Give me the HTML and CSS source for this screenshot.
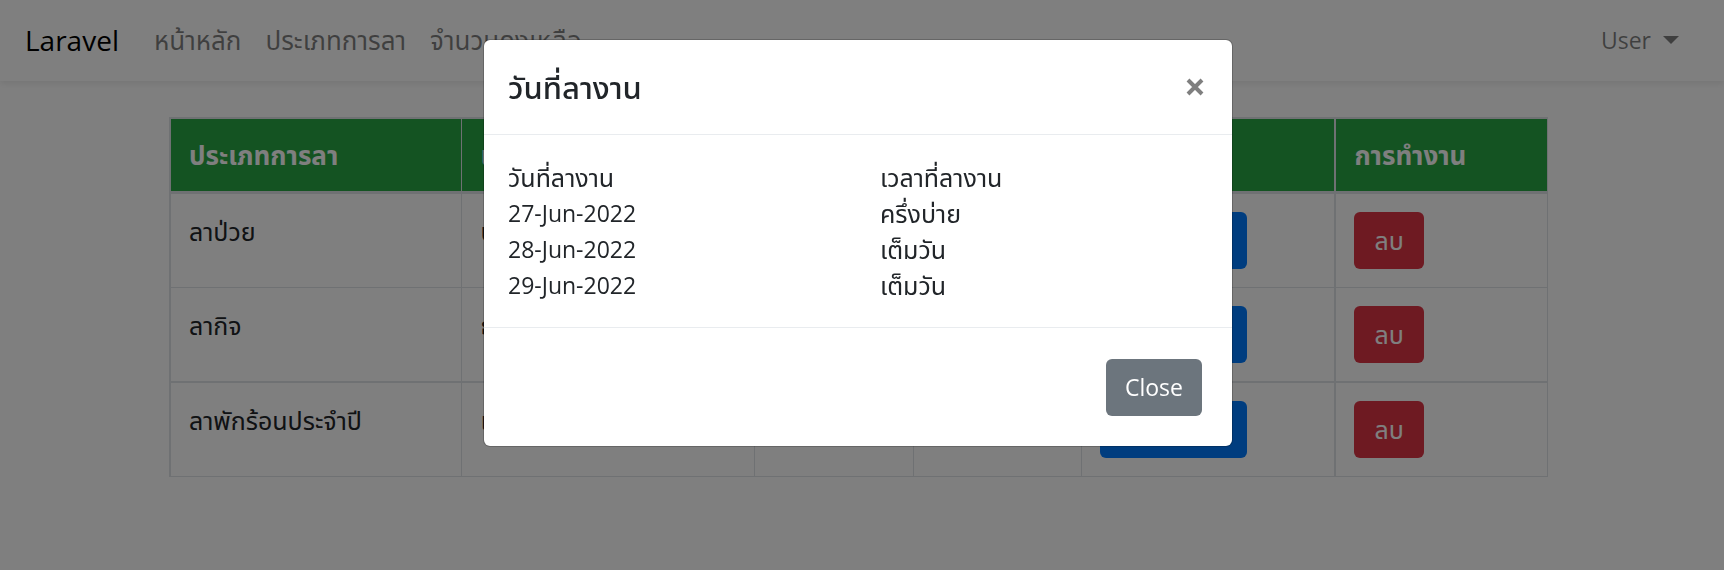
FILE: index.html
```
<!DOCTYPE html>
<html lang="th">
<head>
<meta charset="utf-8">
<meta name="viewport" content="width=device-width, initial-scale=1">
<title>Laravel</title>
<link rel="stylesheet" href="styles.css">
</head>
<body>
<nav class="navbar">
  <a class="brand" href="#">Laravel</a>
  <ul class="nav-links">
    <li><a href="#">หน้าหลัก</a></li>
    <li><a href="#">ประเภทการลา</a></li>
    <li><a href="#">จำนวนคงเหลือ</a></li>
  </ul>
  <button class="user-menu" type="button">User <span class="caret"></span></button>
</nav>
<main class="container">
  <table class="leave-table">
    <colgroup>
      <col class="col-type"><col class="col-reason"><col class="col-start"><col class="col-end"><col class="col-dates"><col class="col-action">
    </colgroup>
    <thead>
      <tr><th>ประเภทการลา</th><th>เหตุผล</th><th></th><th></th><th></th><th>การทำงาน</th></tr>
    </thead>
    <tbody>
      <tr><td>ลาป่วย</td><td>ปวดหัว</td><td></td><td></td><td><button class="btn btn-primary" type="button">วันที่ลางาน</button></td><td><button class="btn btn-danger" type="button">ลบ</button></td></tr>
      <tr><td>ลากิจ</td><td>ธุระ</td><td></td><td></td><td><button class="btn btn-primary" type="button">วันที่ลางาน</button></td><td><button class="btn btn-danger" type="button">ลบ</button></td></tr>
      <tr><td>ลาพักร้อนประจำปี</td><td>เที่ยว</td><td></td><td></td><td><button class="btn btn-primary" type="button">วันที่ลางาน</button></td><td><button class="btn btn-danger" type="button">ลบ</button></td></tr>
    </tbody>
  </table>
</main>
<div class="backdrop">
  <section class="modal" role="dialog" aria-modal="true" aria-labelledby="modal-title">
    <header class="modal-header">
      <h5 class="modal-title" id="modal-title">วันที่ลางาน</h5>
      <button class="close" type="button" aria-label="Close">
        <svg viewBox="0 0 18 18" width="18" height="18" aria-hidden="true"><path d="M2 2 16 16M16 2 2 16"/></svg>
      </button>
    </header>
    <div class="modal-body">
      <div class="thai">วันที่ลางาน</div><div class="thai">เวลาที่ลางาน</div>
      <div>27-Jun-2022</div><div class="thai">ครึ่งบ่าย</div>
      <div>28-Jun-2022</div><div class="thai">เต็มวัน</div>
      <div>29-Jun-2022</div><div class="thai">เต็มวัน</div>
    </div>
    <footer class="modal-footer">
      <button class="btn btn-secondary" type="button">Close</button>
    </footer>
  </section>
</div>
</body>
</html>
```
FILE: styles.css
```
* { box-sizing: border-box; }
body {
  margin: 0;
  font-family: "Open Sans", "Noto Sans Thai", "Noto Sans", sans-serif;
  font-size: 23px;
  line-height: 36px;
  color: #212529;
  background: #fff;
}
button { font: inherit; }
.navbar {
  display: flex;
  align-items: center;
  padding: 11px 39px 13px 25px;
  min-height: 81px;
  box-shadow: 0 3px 6px rgba(0, 0, 0, .075);
}
.brand {
  margin-right: 23px;
  font-size: 28px;
  color: #000;
  text-decoration: none;
}
.nav-links {
  display: flex;
  margin: 0;
  padding: 0;
  list-style: none;
  font-size: 26px;
}
.nav-links a {
  padding: 12px;
  color: rgba(0, 0, 0, .5);
  text-decoration: none;
}
.user-menu {
  display: flex;
  align-items: center;
  gap: 12px;
  margin-left: auto;
  padding: 6px;
  border: 0;
  background: none;
  color: rgba(0, 0, 0, .5);
}
.caret {
  border: 8px solid transparent;
  border-top-color: currentColor;
  border-bottom: 0;
}
.container {
  width: calc(80% + 7px);
  margin: 36px auto 0;
  padding-right: 7px;
}
.thai, .leave-table { font-size: 25px; }
.leave-table {
  width: 100%;
  table-layout: fixed;
  border-collapse: collapse;
}
.leave-table th, .leave-table td {
  padding: 18px;
  border: 1px solid #dee2e6;
  text-align: left;
  vertical-align: top;
}
.leave-table th {
  border-top-width: 2px;
  border-bottom-width: 3px;
  background: #28a745;
  color: #fff;
  font-size: 26px;
}
.leave-table th:first-child, .leave-table td:first-child { border-left-width: 2px; }
.leave-table th:last-child, .leave-table td:last-child { border-left-width: 2px; }
.leave-table tr:last-child td { border-top-width: 2px; }
.leave-table td { line-height: 38px; }
.leave-table .btn { padding: 9px 19px; }
.col-type, .col-reason { width: 21.2%; }
.col-start { width: 11.6%; }
.col-end { width: 12.2%; }
.col-dates { width: 18.4%; }
.btn {
  display: block;
  padding: 9px 18px;
  border: 1px solid transparent;
  border-radius: 6px;
  line-height: 37px;
  color: #fff;
}
.btn-primary { background: #007bff; }
.btn-danger { background: #dc3545; }
.btn-secondary { background: #6c757d; }
.backdrop {
  position: fixed;
  inset: 0;
  display: flex;
  align-items: flex-start;
  justify-content: center;
  padding: 39px 8px 0 0;
  background: rgba(0, 0, 0, .5);
}
.modal {
  width: 750px;
  max-width: 100%;
  border: 1px solid rgba(0, 0, 0, .2);
  border-radius: 7px;
  background: #fff;
  background-clip: padding-box;
}
.modal-header {
  display: flex;
  align-items: center;
  justify-content: space-between;
  padding: 24px;
  border-bottom: 1px solid #e9ecef;
}
.modal-title {
  margin: 0;
  font-size: 31px;
  font-weight: 500;
  line-height: 46px;
}
.close {
  display: flex;
  padding: 4px;
  border: 0;
  background: none;
}
.close path {
  fill: none;
  stroke: #7f7f7f;
  stroke-width: 4;
}
.modal-body {
  display: grid;
  grid-template-columns: 1fr 1fr;
  column-gap: 44px;
  padding: 24px;
}
.modal-footer {
  display: flex;
  justify-content: flex-end;
  padding: 31px 30px 30px;
  border-top: 1px solid #e9ecef;
}
```
